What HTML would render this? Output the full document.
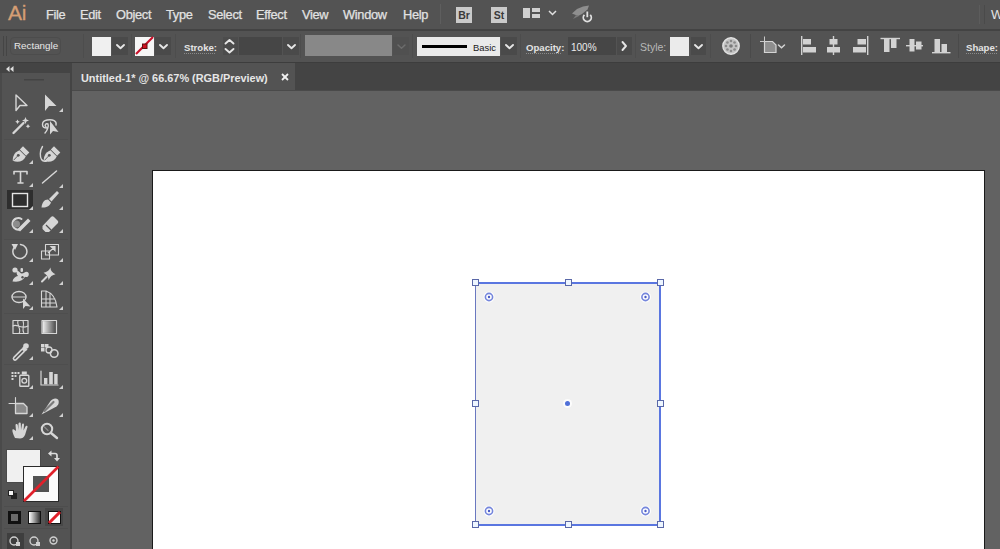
<!DOCTYPE html>
<html><head><meta charset="utf-8">
<style>
*{margin:0;padding:0;box-sizing:border-box}
html,body{width:1000px;height:549px;overflow:hidden;background:#535353;font-family:"Liberation Sans",sans-serif;color:#dcdcdc}
.a{position:absolute}
svg{position:absolute;overflow:visible}
#menu{left:0;top:0;width:1000px;height:29px;background:#535353}
.mi{position:absolute;top:7px;font-size:12.8px;color:#e2e2e2;letter-spacing:-0.3px;-webkit-text-stroke:0.25px #e2e2e2}
#sep1{left:0;top:29px;width:1000px;height:2px;background:#434343}
#ctrl{left:0;top:31px;width:1000px;height:31px;background:#535353}
#sep2{left:0;top:62px;width:1000px;height:1px;background:#3d3d3d}
#tabrow{left:72px;top:63px;width:928px;height:27px;background:#444444}
#tab{left:72px;top:63px;width:223px;height:27px;background:#535353}
#tabline{left:72px;top:90px;width:928px;height:1px;background:#4a4a4a}
#canvas{left:72px;top:91px;width:928px;height:458px;background:#626262}
#artboard{left:152px;top:170px;width:833px;height:379px;background:#fff;border-left:1px solid #1a1a1a;border-top:1px solid #1a1a1a;border-right:1px solid #1a1a1a}
#tools{left:0;top:63px;width:71px;height:486px;background:#535353}
#toolhdr{left:0;top:63px;width:70px;height:10px;background:#444444}
#toolsep{left:70px;top:63px;width:2px;height:486px;background:#444444}
.lbl{position:absolute;font-size:11px;color:#e0e0e0}
.chev{position:absolute;top:36px;width:16px;height:20px;background:#4a4a4a}
.box{position:absolute}
</style></head><body>
<!-- MENU -->
<div id="menu" class="a">
  <div class="a" style="left:8px;top:1px;font-size:21px;color:#d59e74;letter-spacing:-0.3px;-webkit-text-stroke:0.3px #d59e74">Ai</div>
  <div class="mi" style="left:46px">File</div>
  <div class="mi" style="left:80px">Edit</div>
  <div class="mi" style="left:116px">Object</div>
  <div class="mi" style="left:166px">Type</div>
  <div class="mi" style="left:208px">Select</div>
  <div class="mi" style="left:256px">Effect</div>
  <div class="mi" style="left:302px">View</div>
  <div class="mi" style="left:343px">Window</div>
  <div class="mi" style="left:403px">Help</div>
  <div class="a" style="left:440px;top:4px;width:1px;height:20px;background:#5e5e5e"></div>
  <div class="a" style="left:456px;top:7px;width:16px;height:16px;background:#cacaca;color:#3a3a3a;font-size:10.5px;font-weight:bold;text-align:center;line-height:16px">Br</div>
  <div class="a" style="left:491px;top:7px;width:16px;height:16px;background:#cacaca;color:#3a3a3a;font-size:10.5px;font-weight:bold;text-align:center;line-height:16px">St</div>
  <div class="a" style="left:523px;top:8px;width:7px;height:10px;background:#d0d0d0"></div>
  <div class="a" style="left:532px;top:8px;width:8px;height:4px;background:#d0d0d0"></div>
  <div class="a" style="left:532px;top:14px;width:8px;height:4px;background:#d0d0d0"></div>
  <svg style="left:548px;top:10px" width="9" height="6"><polyline points="1,1 4.5,4.5 8,1" fill="none" stroke="#e0e0e0" stroke-width="1.5"/></svg>
  <svg style="left:0;top:0" width="600" height="30">
    <path d="M572,13.5 L577,9 L583,6.5 L589,5.5 L587.5,9.5 L582,14 L578,16 Z" fill="#8e8e8e"/>
    <path d="M576,15 L573,19 L579,16 Z" fill="#7a7a7a"/>
    <circle cx="587.3" cy="17.5" r="4" fill="#535353" stroke="none"/>
    <path d="M584.4,14.8 A4,4 0 1 0 590.2,14.8" fill="none" stroke="#e0e0e0" stroke-width="1.8"/>
    <line x1="587.3" y1="11.5" x2="587.3" y2="17.2" stroke="#e0e0e0" stroke-width="1.8"/>
  </svg>
  <div class="a" style="left:979px;top:5px;width:1px;height:19px;background:#5c5c5c"></div><div class="a" style="left:984px;top:5px;width:1px;height:19px;background:#4a4a4a"></div>
  <div class="a" style="left:991px;top:7px;font-size:13px;color:#e4e4e4">W</div>
</div>
<div id="sep1" class="a"></div>
<!-- CONTROL BAR -->
<div id="ctrl" class="a"></div>
<div class="a" style="left:3px;top:36px;width:1px;height:20px;background:#454545"></div>
<div class="a" style="left:6px;top:36px;width:1px;height:20px;background:#454545"></div>
<div class="a" style="left:10px;top:37px;width:51px;height:18px;border:1px solid #4c4c4c;border-radius:4px"></div>
<div class="a" style="left:14px;top:40px;font-size:9.8px;font-weight:normal;color:#e8e8e8;letter-spacing:0px;white-space:nowrap">Rectangle</div>
<div class="a" style="left:83px;top:34px;width:1px;height:24px;background:#4d4d4d"></div>
<div class="a" style="left:92px;top:37px;width:19px;height:19px;background:#f0f0f0"></div>
<div class="a" style="left:112px;top:37px;width:16px;height:18px;background:#4a4a4a"></div>
<svg style="left:116px;top:44px" width="9" height="6"><polyline points="1,1 4.5,4.2 8,1" fill="none" stroke="#e6e6e6" stroke-width="1.9" stroke-linecap="round" stroke-linejoin="round"/></svg>
<div class="a" style="left:131px;top:34px;width:1px;height:24px;background:#4d4d4d"></div>
<div class="a" style="left:135px;top:37px;width:19px;height:19px;background:#f6f6f6"></div>
<svg style="left:0;top:0" width="200" height="70"><line x1="136" y1="54" x2="153" y2="37" stroke="#c8102a" stroke-width="2.2"/><rect x="142.5" y="44" width="4.5" height="4.5" fill="#d01020" stroke="#601010" stroke-width="1"/></svg>
<div class="a" style="left:155px;top:37px;width:16px;height:18px;background:#4a4a4a"></div>
<svg style="left:159px;top:44px" width="9" height="6"><polyline points="1,1 4.5,4.2 8,1" fill="none" stroke="#e6e6e6" stroke-width="1.9" stroke-linecap="round" stroke-linejoin="round"/></svg>
<div class="a" style="left:175px;top:34px;width:1px;height:24px;background:#4d4d4d"></div>
<div class="a" style="left:184px;top:42px;font-size:9.6px;font-weight:bold;color:#e4e4e4;letter-spacing:0px;white-space:nowrap">Stroke:</div>
<div class="a" style="left:184px;top:53px;width:31px;height:0;border-top:1px dotted #8a8a8a"></div>
<div class="a" style="left:223px;top:37px;width:15px;height:18px;background:#4c4c4c"></div>
<svg style="left:0;top:0" width="300" height="70"><polyline points="225.5,43.5 229.5,40 233.5,43.5" fill="none" stroke="#e6e6e6" stroke-width="1.9" stroke-linecap="round" stroke-linejoin="round"/><polyline points="225.5,49 229.5,52.5 233.5,49" fill="none" stroke="#e6e6e6" stroke-width="1.9" stroke-linecap="round" stroke-linejoin="round"/></svg>
<div class="a" style="left:239px;top:37px;width:43px;height:18px;background:#464646"></div>
<div class="a" style="left:283px;top:37px;width:16px;height:18px;background:#4a4a4a"></div>
<svg style="left:287px;top:44px" width="9" height="6"><polyline points="1,1 4.5,4.2 8,1" fill="none" stroke="#e6e6e6" stroke-width="1.9" stroke-linecap="round" stroke-linejoin="round"/></svg>
<div class="a" style="left:300px;top:34px;width:1px;height:24px;background:#4d4d4d"></div>
<div class="a" style="left:305px;top:35px;width:87px;height:21px;background:#888888"></div>
<div class="a" style="left:393px;top:37px;width:16px;height:18px;background:#505050"></div>
<svg style="left:397px;top:44px" width="9" height="6"><polyline points="1,1 4.5,4.2 8,1" fill="none" stroke="#6c6c6c" stroke-width="1.5" stroke-linecap="round" stroke-linejoin="round"/></svg>
<div class="a" style="left:412px;top:34px;width:1px;height:24px;background:#4d4d4d"></div>
<div class="a" style="left:417px;top:37px;width:83px;height:19px;background:#eaeaea"></div>
<div class="a" style="left:422px;top:45px;width:45px;height:3px;background:#000000"></div>
<div class="a" style="left:473px;top:42px;font-size:9.4px;font-weight:normal;color:#1a1a1a;letter-spacing:0px;white-space:nowrap">Basic</div>
<div class="a" style="left:501px;top:37px;width:16px;height:18px;background:#4a4a4a"></div>
<svg style="left:505px;top:44px" width="9" height="6"><polyline points="1,1 4.5,4.2 8,1" fill="none" stroke="#e6e6e6" stroke-width="1.9" stroke-linecap="round" stroke-linejoin="round"/></svg>
<div class="a" style="left:520px;top:34px;width:1px;height:24px;background:#4d4d4d"></div>
<div class="a" style="left:526px;top:42px;font-size:9.6px;font-weight:bold;color:#e4e4e4;letter-spacing:0px;white-space:nowrap">Opacity:</div>
<div class="a" style="left:526px;top:53px;width:35px;height:0;border-top:1px dotted #8a8a8a"></div>
<div class="a" style="left:568px;top:37px;width:48px;height:18px;background:#464646"></div>
<div class="a" style="left:571px;top:42px;font-size:10px;font-weight:normal;color:#ececec;letter-spacing:0px;white-space:nowrap">100%</div>
<div class="a" style="left:617px;top:37px;width:15px;height:18px;background:#4a4a4a"></div>
<svg style="left:0;top:0" width="700" height="70"><polyline points="622.5,42 626,46 622.5,50" fill="none" stroke="#e6e6e6" stroke-width="1.9" stroke-linecap="round" stroke-linejoin="round"/></svg>
<div class="a" style="left:635px;top:34px;width:1px;height:24px;background:#4d4d4d"></div>
<div class="a" style="left:640px;top:41px;font-size:10.5px;font-weight:normal;color:#b8b8b8;letter-spacing:0px;white-space:nowrap">Style:</div>
<div class="a" style="left:670px;top:37px;width:19px;height:19px;background:#ebebeb"></div>
<div class="a" style="left:691px;top:37px;width:15px;height:18px;background:#4a4a4a"></div>
<svg style="left:694px;top:44px" width="9" height="6"><polyline points="1,1 4.5,4.2 8,1" fill="none" stroke="#e6e6e6" stroke-width="1.9" stroke-linecap="round" stroke-linejoin="round"/></svg>
<div class="a" style="left:710px;top:34px;width:1px;height:24px;background:#4d4d4d"></div>
<svg style="left:0;top:0" width="800" height="70"><circle cx="731" cy="46" r="8.2" fill="#c4c4c4" stroke="#e2e2e2" stroke-width="1.4"/><circle cx="736.00" cy="46.00" r="1.3" fill="#8a8a8a"/><circle cx="734.54" cy="49.54" r="1.3" fill="#8a8a8a"/><circle cx="731.00" cy="51.00" r="1.3" fill="#8a8a8a"/><circle cx="727.46" cy="49.54" r="1.3" fill="#8a8a8a"/><circle cx="726.00" cy="46.00" r="1.3" fill="#8a8a8a"/><circle cx="727.46" cy="42.46" r="1.3" fill="#8a8a8a"/><circle cx="731.00" cy="41.00" r="1.3" fill="#8a8a8a"/><circle cx="734.54" cy="42.46" r="1.3" fill="#8a8a8a"/><circle cx="731" cy="46" r="1.8" fill="#7a7a7a"/></svg>
<div class="a" style="left:750px;top:34px;width:1px;height:24px;background:#4a4a4a"></div>
<svg style="left:0;top:0" width="800" height="70">
<path d="M764.5,41.5 L764.5,52.5 L776,52.5 L776,45 L772.5,41.5 Z" fill="#8e8e8e" stroke="#d4d4d4" stroke-width="1.2"/>
<line x1="760" y1="41.5" x2="764.5" y2="41.5" stroke="#c8c8c8" stroke-width="1"/>
<line x1="764.5" y1="36.5" x2="764.5" y2="41.5" stroke="#c8c8c8" stroke-width="1"/>
<polyline points="778.5,45 781.5,47.8 784.5,45" fill="none" stroke="#d4d4d4" stroke-width="1.5" stroke-linecap="round"/>
</svg>
<svg style="left:0;top:0" width="1000" height="70"><g fill="#d2d2d2">
<rect x="801" y="36" width="1.4" height="19"/><rect x="803" y="39" width="8" height="5.5"/><rect x="803" y="47" width="13" height="5.5"/>
<rect x="832.8" y="36" width="1.4" height="19"/><rect x="829.5" y="39" width="8" height="5.5"/><rect x="827" y="47" width="13" height="5.5"/>
<rect x="867" y="36" width="1.4" height="19"/><rect x="857.5" y="39" width="8.5" height="5.5"/><rect x="853" y="47" width="13" height="5.5"/>
<rect x="880.5" y="37.8" width="19.5" height="1.4"/><rect x="884" y="39" width="5.5" height="13"/><rect x="891" y="39" width="5.5" height="9"/>
<rect x="906" y="45" width="17" height="1.4"/><rect x="909.5" y="39" width="5" height="12.5"/><rect x="916" y="41.5" width="5.5" height="8"/>
<rect x="932" y="52" width="18.5" height="1.4"/><rect x="934.5" y="39" width="5.5" height="13"/><rect x="941.5" y="44" width="5.5" height="8"/>
</g></svg>
<div class="a" style="left:958px;top:34px;width:1px;height:24px;background:#4a4a4a"></div>
<div class="a" style="left:966px;top:42px;font-size:9.6px;font-weight:bold;color:#e4e4e4;letter-spacing:0px;white-space:nowrap">Shape:</div>
<div class="a" style="left:966px;top:53px;width:31px;height:0;border-top:1px dotted #8a8a8a"></div>
<div id="sep2" class="a"></div>
<!-- TAB ROW -->
<div id="tabrow" class="a"></div>
<div id="tab" class="a"><div class="a" style="left:9px;top:9px;font-size:10.9px;font-weight:bold;color:#e6e6e6">Untitled-1* @ 66.67% (RGB/Preview)</div>
<svg style="left:209px;top:10px" width="8" height="8"><line x1="1" y1="1" x2="7" y2="7" stroke="#f0f0f0" stroke-width="1.8"/><line x1="7" y1="1" x2="1" y2="7" stroke="#f0f0f0" stroke-width="1.8"/></svg></div>
<div id="tabline" class="a"></div>
<!-- CANVAS -->
<div id="canvas" class="a"></div>
<div id="artboard" class="a"></div>
<!-- RECT -->
<div class="a" style="left:476px;top:284px;width:184px;height:240px;background:#f0f0f0"></div>
<svg style="left:0;top:0" width="1000" height="549">
  <line x1="475.5" y1="283" x2="475.5" y2="524" stroke="#6a78c0" stroke-width="1"/>
  <g fill="none" stroke="#5a76e0">
    <line x1="475" y1="283" x2="661" y2="283" stroke-width="2"/>
    <line x1="475" y1="525" x2="661" y2="525" stroke-width="2"/>
    <line x1="660" y1="283" x2="660" y2="525" stroke-width="2"/>
  </g>
  <g fill="#eef6ff" stroke="#5a68a8" stroke-width="1">
    <rect x="472.5" y="279.5" width="6" height="6"/>
    <rect x="565.5" y="279.5" width="6" height="6"/>
    <rect x="657.5" y="279.5" width="6" height="6"/>
    <rect x="472.5" y="400.5" width="6" height="6"/>
    <rect x="657.5" y="400.5" width="6" height="6"/>
    <rect x="472.5" y="521.5" width="6" height="6"/>
    <rect x="565.5" y="521.5" width="6" height="6"/>
    <rect x="657.5" y="521.5" width="6" height="6"/>
  </g>
  <circle cx="567.5" cy="403.5" r="4.5" fill="#ffffff" opacity="0.8"/>
  <circle cx="567.5" cy="403.5" r="2.5" fill="#5070d8"/>
  <g fill="#ffffff" opacity="0.9">
    <circle cx="489" cy="297" r="5.5"/><circle cx="645.5" cy="297" r="5.5"/><circle cx="489" cy="511" r="5.5"/><circle cx="645.5" cy="511" r="5.5"/>
  </g>
  <g fill="none" stroke="#7586dc" stroke-width="1.6">
    <circle cx="489" cy="297" r="3.6"/>
    <circle cx="645.5" cy="297" r="3.6"/>
    <circle cx="489" cy="511" r="3.6"/>
    <circle cx="645.5" cy="511" r="3.6"/>
  </g>
  <g fill="#4a5cc8">
    <circle cx="489" cy="297" r="1.2"/>
    <circle cx="645.5" cy="297" r="1.2"/>
    <circle cx="489" cy="511" r="1.2"/>
    <circle cx="645.5" cy="511" r="1.2"/>
  </g>
</svg>
<!-- TOOLS -->
<div id="tools" class="a"></div>
<div id="toolhdr" class="a"></div>
<svg style="left:6px;top:66px" width="8" height="6"><path d="M0,3 L3.5,0 L3.5,6 Z M4,3 L7.5,0 L7.5,6 Z" fill="#e0e0e0"/></svg>
<div class="a" style="left:7px;top:190px;width:26px;height:19px;background:#2e2e2e"></div><svg style="left:0;top:0" width="72" height="549"><rect x="12.5" y="193.5" width="15" height="13" fill="none" stroke="#e4e4e4" stroke-width="1.4"/></svg><svg style="left:0;top:0" width="72" height="549"><defs><linearGradient id="tg" x1="0" x2="1"><stop offset="0" stop-color="#f0f0f0"/><stop offset="1" stop-color="#4a4a4a"/></linearGradient></defs><rect x="42.6" y="321.1" width="13.3" height="11.8" fill="url(#tg)"/></svg><svg style="left:0;top:0" width="72" height="549">
<g fill="#cfcfcf"><path d="M59,112 L63,108 L63,112 Z"/><path d="M29,164 L33,160 L33,164 Z"/><path d="M29,187 L33,183 L33,187 Z"/><path d="M59,188 L63,184 L63,188 Z"/><path d="M29,210 L33,206 L33,210 Z"/><path d="M59,210 L63,206 L63,210 Z"/><path d="M29,233 L33,229 L33,233 Z"/><path d="M59,233 L63,229 L63,233 Z"/><path d="M29,262 L33,258 L33,262 Z"/><path d="M59,262 L63,258 L63,262 Z"/><path d="M29,285 L33,281 L33,285 Z"/><path d="M59,285 L63,281 L63,285 Z"/><path d="M29,310 L33,306 L33,310 Z"/><path d="M59,310 L63,306 L63,310 Z"/><path d="M29,360 L33,356 L33,360 Z"/><path d="M29,389 L33,385 L33,389 Z"/><path d="M59,389 L63,385 L63,389 Z"/><path d="M29,417 L33,413 L33,417 Z"/><path d="M59,417 L63,413 L63,417 Z"/><path d="M29,440 L33,436 L33,440 Z"/></g>
<rect x="24" y="79" width="20" height="1.5" fill="#444"/>
<g fill="none" stroke="#d6d6d6" stroke-width="1.4" stroke-linejoin="round" stroke-linecap="round">
 <!-- selection hollow -->
 <path d="M16,95 L16,110.5 L20,105.5 L27,105.5 Z"/>
 <!-- magic wand -->
 <line x1="13.5" y1="133" x2="23.5" y2="123" stroke-width="2.4"/>
 <!-- lasso -->
 <path d="M47,128 C41,128 41,121 47,120 C53,119 57,121 56,125 M46,127 C44,125 46,123 48,124 C49,126 47,131 45,133"/>
 <!-- curvature pen line -->
 <path d="M42.5,146.5 C39.5,151 40,157 41.5,159.5 C42.5,161 44.5,161.5 46.5,161"/>
 <!-- T -->
 <path d="M14,171.5 L27,171.5 M14,171.5 L14,174 M27,171.5 L27,174 M20.5,171.5 L20.5,183 M18,183 L23,183" stroke-width="1.6"/>
 <!-- line -->
 <line x1="42.5" y1="183" x2="56.5" y2="171" stroke-width="1.5"/>
 <!-- shaper circle -->
 <path d="M19.5,229.5 A5.8,5.8 0 1 1 21.5,219" stroke-width="2"/>
 <!-- eraser -->
 <!-- rotate -->
 <path d="M14.5,247 A7,7 0 1 0 20.5,244.5" stroke-width="1.5"/>
 <!-- scale -->
 <rect x="41.5" y="251" width="8" height="8" stroke-width="1.1"/>
 <rect x="45.5" y="244.5" width="13" height="10.5" stroke-width="1.1"/>
 <!-- shape builder ellipses -->
 <ellipse cx="19" cy="297" rx="7" ry="5.5" stroke-width="1.3"/>
 <line x1="12" y1="297" x2="26" y2="297" stroke-width="1"/>
 <!-- perspective grid -->
 <path d="M41.5,291 L41.5,307 L57,307 C56,299 52,293 46,291 Z M46,291 L46,307 M50,293 L50,307 M41.5,299 L55,299 M41.5,303 L56,303" stroke-width="1.1"/>
 <!-- mesh -->
 <rect x="13" y="320.5" width="15" height="13" stroke-width="1.2"/>
 <path d="M13,326 C17,323 20,330 28,326 M18,320.5 C16,325 22,329 19,333.5 M23,320.5 C25,326 21,329 24,333.5" stroke-width="1.1"/>
 <!-- gradient outline -->
 <rect x="42" y="320.5" width="14.5" height="13" stroke-width="1.2"/>
 <!-- eyedropper -->
 <path d="M15,358.5 L23,350.5" stroke-width="4.6" stroke-linecap="round"/>
 <!-- blend -->
 <circle cx="49" cy="350" r="3" stroke-width="1.3"/>
 <circle cx="54.2" cy="353.5" r="3.8" stroke-width="1.6"/>
 <!-- symbol sprayer -->
 <rect x="19.8" y="375.3" width="9" height="11" rx="0.8" stroke-width="1.4"/>
 <circle cx="24.3" cy="380.8" r="2.4" stroke-width="1.3"/>
 <!-- column graph -->
 <path d="M41,371 L41,385 L58,385" stroke-width="1.2"/>
 <!-- artboard -->
 <path d="M15.5,403.5 L15.5,413.5 L27,413.5 L27,407 L23.5,403.5 Z" fill="#8a8a8a" stroke-width="1.3"/>
 <path d="M9,403.5 L15.5,403.5 M15.5,397.5 L15.5,403.5" stroke-width="1.1"/>
 <!-- zoom -->
 <circle cx="47" cy="429" r="5.2" stroke-width="2"/>
 <line x1="51" y1="433" x2="57" y2="438" stroke-width="2.4"/>
 <path d="M44.5,427 L48,430.5" stroke="#8a8a8a" stroke-width="1.3"/>
</g>
<g fill="#d6d6d6">
 <!-- direct selection filled -->
 <path d="M45,94.5 L45,111 L49,106 L56.5,106 Z"/>
 <!-- wand sparkles -->
 <path d="M25.5,117 L26.5,119.5 L29,120.5 L26.5,121.5 L25.5,124 L24.5,121.5 L22,120.5 L24.5,119.5 Z"/>
 <path d="M17.5,119.5 L18.3,121 L19.8,121.8 L18.3,122.6 L17.5,124 L16.7,122.6 L15.2,121.8 L16.7,121 Z"/>
 <path d="M28,124 L28.8,125.5 L30.3,126.3 L28.8,127.1 L28,128.5 L27.2,127.1 L25.7,126.3 L27.2,125.5 Z"/>
 <!-- lasso arrow -->
 <path d="M50,121 L50,134.5 L53,131 L58.5,132 Z"/>
 <!-- pen nib -->
<g transform="translate(0,0)"><path d="M12.8,160.8 C12.5,157 14,152.5 19.5,150.2 L25.8,156.5 C23.5,161.5 18,163 12.8,160.8 Z"/>
 <path d="M19.8,149.5 L23,146.3 L29.3,152.6 L26.1,155.8 Z"/>
 <circle cx="18.3" cy="155.3" r="1.4" fill="#535353"/><path d="M13.5,160.3 L17.6,156" stroke="#535353" stroke-width="0.9"/></g>
<!-- curvature pen nib -->
<g transform="translate(31,0)"><path d="M12.8,160.8 C12.5,157 14,152.5 19.5,150.2 L25.8,156.5 C23.5,161.5 18,163 12.8,160.8 Z"/>
 <path d="M19.8,149.5 L23,146.3 L29.3,152.6 L26.1,155.8 Z"/>
 <circle cx="18.3" cy="155.3" r="1.4" fill="#535353"/><path d="M13.5,160.3 L17.6,156" stroke="#535353" stroke-width="0.9"/></g>
 <!-- paintbrush -->
 <path d="M49,199 L57,191 L59,193 L51.5,201.5 Z"/>
 <path d="M41.5,207.5 C42,203 44,199.5 48,199.5 L51,202.5 C50,206 46,208 41.5,207.5 Z"/>
 <!-- shaper stick -->
 <path d="M17.5,229 L28,218.5 L30.5,221 L20,231.5 Z"/>
 <circle cx="16.5" cy="224" r="3.5" fill="#8c8c8c"/>
 <!-- eraser -->
 <path d="M42.5,226 L51,217 C52,216 53,216 54,217 L57.5,220.5 C58.5,221.5 58.5,222.5 57.5,223.5 L49,232 L45.5,232 L42.5,229 Z"/>
 <!-- rotate arrow head -->
 <path d="M11.5,244 L18,244 L15,250 Z"/>
 <!-- scale arrow -->
 <path d="M48,253 L55,246.5 M55,246.5 L51,246.5 L55,250.5 Z" stroke="#d6d6d6" stroke-width="1.2"/>
 <!-- width tool figure -->
 <path d="M12.5,281.5 C13,278 15.5,276.5 18,276 C16.5,274.5 16,272 17.5,270.5 L20,272.5 C21,274 23,273.5 24.5,272.5 C26.5,271 29,272 28.8,274.5 C28.6,277 26.5,277.5 25,276.8 C23.5,279.5 20.5,281.5 16,281.8 Z"/>
 <circle cx="15" cy="270" r="2.6"/>
 <rect x="20.5" y="268" width="2.5" height="4" rx="1"/>
 <!-- pin -->
 <path d="M49.5,267.5 Q50.5,272 55.5,273.5 Q51,275 49.5,280 Q48.5,275.5 43.5,273.5 Q48.5,272 49.5,267.5 Z" transform="rotate(8 49.5 273.8)"/>
 <path d="M46.5,277 L42,281.5" stroke="#d6d6d6" stroke-width="2" stroke-linecap="round"/>
 <!-- shape builder arrow -->
 <path d="M23,298.5 L23,309 L25.5,306 L30.5,306.5 Z"/>
 <!-- eyedropper bulb -->
 <circle cx="26" cy="346" r="2.8"/><path d="M22,348 L25.5,351.5 L27.5,349.5 L24,346 Z"/>
 <!-- blend squares -->
 <rect x="41" y="344" width="3.5" height="3.5"/><rect x="45" y="344" width="3.5" height="3.5"/><rect x="41" y="348" width="3.5" height="3.5"/>
 <!-- symbol sprayer dots -->
 <rect x="11.5" y="372" width="2" height="2"/><rect x="14.5" y="372" width="2" height="2"/><rect x="17.5" y="372" width="2" height="2"/><rect x="11.5" y="375" width="2" height="2"/><rect x="14.5" y="375" width="2" height="2"/><rect x="11.5" y="378" width="2" height="2"/>
 <rect x="21.8" y="371.5" width="5" height="3"/>
 <!-- column bars -->
 <rect x="44" y="378" width="3.4" height="6.3"/><rect x="49.2" y="372" width="3.6" height="12.3"/><rect x="54.2" y="374" width="3.4" height="10.3"/>
 <!-- knife -->
 <path d="M41.5,414.5 L50.5,401 C52.5,398.5 56,397.5 58,399.5 C59.5,401.5 58.5,405 56.5,406.5 Z"/>
 <!-- hand -->
 <path d="M15,438 C13,434 12,431 12.5,429.5 C13.5,428.5 15,430 16,431 L15.5,425 C15.5,423.5 17.5,423.5 17.8,425 L18.3,430 L18.5,423.5 C18.8,422 20.7,422 20.8,423.5 L21,430 L22,424.5 C22.3,423 24,423.3 24,424.8 L23.5,430.5 L25.5,426.5 C26,425.2 27.8,425.8 27.5,427 L25,435 C24,437.5 22,438.5 20,438.5 Z"/>
</g>
<circle cx="22.5" cy="277.2" r="1.2" fill="#535353"/>
<path d="M15,358.5 L22.5,351" stroke="#535353" stroke-width="1.6" stroke-linecap="round"/>
<!-- eraser stripe -->
<path d="M46,225 L51,230" stroke="#535353" stroke-width="1.2"/>
<!-- slice inner -->
<path d="M44.5,411 L53.5,402" stroke="#7a7a7a" stroke-width="2.2" stroke-linecap="round"/>
</svg>
<div class="a" style="left:4px;top:139px;width:64px;height:1px;background:#4e4e4e"></div><div class="a" style="left:4px;top:239px;width:64px;height:1px;background:#4e4e4e"></div><div class="a" style="left:4px;top:313px;width:64px;height:1px;background:#4e4e4e"></div><div class="a" style="left:4px;top:364px;width:64px;height:1px;background:#4e4e4e"></div>
<!-- FILL/STROKE -->
<div class="a" style="left:6px;top:449px;width:35px;height:34px;background:#f0f0f0;border:1px solid #4a4a4a"></div>
<svg style="left:0;top:0" width="72" height="549">
 <path d="M50.5,453.5 L55,453.5 Q57,453.5 57,455.5 L57,458" fill="none" stroke="#dcdcdc" stroke-width="1.7"/><path d="M48,453.5 L51.5,450.5 L51.5,456.5 Z M57,461.5 L54,458 L60,458 Z" fill="#dcdcdc"/>
</svg>
<div class="a" style="left:23px;top:466px;width:36px;height:36px;background:#2a2a2a"></div>
<div class="a" style="left:24px;top:467px;width:34px;height:34px;background:#fbfbfb"></div>
<div class="a" style="left:33px;top:476px;width:16px;height:16px;background:#535353"></div>
<svg style="left:0;top:0" width="72" height="549"><line x1="24" y1="501" x2="58.5" y2="466.5" stroke="#e0202a" stroke-width="2.6"/></svg>
<!-- default fill/stroke -->
<div class="a" style="left:11px;top:493px;width:6px;height:6px;background:#222"></div>
<div class="a" style="left:8px;top:490px;width:6px;height:6px;background:#f4f4f4;border:1px solid #222"></div>
<div class="a" style="left:4px;top:506px;width:64px;height:1px;background:#4d4d4d"></div>
<!-- color/gradient/none -->
<div class="a" style="left:8px;top:511px;width:13px;height:13px;background:#111"></div>
<div class="a" style="left:11px;top:514px;width:7px;height:7px;background:#6a6a6a"></div>
<svg style="left:0;top:0" width="72" height="549"><defs><linearGradient id="g2" x1="0" x2="1"><stop offset="0" stop-color="#fff"/><stop offset="1" stop-color="#333"/></linearGradient></defs>
<rect x="28" y="511" width="13" height="13" fill="#111"/><rect x="29" y="512" width="11" height="11" fill="url(#g2)"/>
<rect x="45" y="508" width="18" height="18" fill="#474747"/>
<rect x="48" y="511" width="13" height="13" fill="#111"/><rect x="49" y="512" width="11" height="11" fill="#fff"/>
<line x1="49" y1="523" x2="60" y2="512" stroke="#e0202a" stroke-width="3"/>
</svg>
<div class="a" style="left:4px;top:528px;width:64px;height:1px;background:#4d4d4d"></div>
<!-- screen modes -->
<div class="a" style="left:7px;top:533px;width:17px;height:16px;background:#3e3e3e"></div>
<svg style="left:0;top:0" width="72" height="549">
 <g fill="none" stroke="#cfcfcf" stroke-width="1.4">
  <circle cx="14" cy="541" r="4"/>
  <circle cx="34" cy="541" r="4"/>
  <circle cx="53.5" cy="540.5" r="3.5"/>
 </g>
 <rect x="16" y="542" width="4" height="4" fill="#cfcfcf"/>
 <rect x="36" y="542" width="4" height="4" fill="#cfcfcf"/>
 <circle cx="53.5" cy="540.5" r="1.2" fill="#cfcfcf"/>
</svg>
<div id="toolsep" class="a"></div>
<div class="a" style="left:0;top:73px;width:2px;height:476px;background:#4a4a4a"></div>
</body></html>
